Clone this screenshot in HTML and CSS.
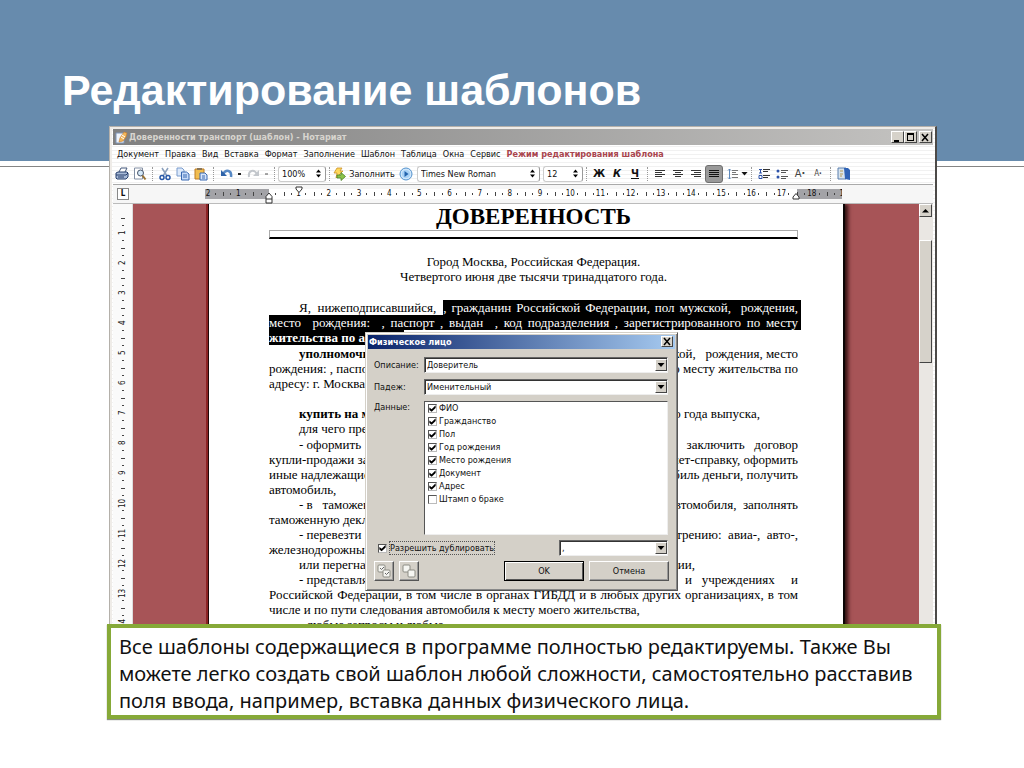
FILE: index.html
```html
<!DOCTYPE html>
<html lang="ru">
<head>
<meta charset="utf-8">
<title>Редактирование шаблонов</title>
<link rel="stylesheet" href="styles.css">
</head>
<body>
<main class="slide">
<h1 class="slide-title">Редактирование шаблонов</h1>
<section class="stage">
<div class="window">
  <header class="titlebar">
    <svg class="app-icon" width="13" height="13" viewBox="0 0 13 13"><path d="M1 2h8v10H1z" fill="#eef3fa" stroke="#7c94b8"/><path d="M4 11 5 7 9 1l3 1-1 4-3 4z" fill="#f2b65a" stroke="#c77a28" stroke-width=".6"/><path d="m7 4 3 2M6 6l3 2" stroke="#fff"/></svg>
    <span class="titlebar-text">Доверенности транспорт (шаблон) - Нотариат</span>
    <div class="win-buttons">
      <button class="win-btn" aria-label="Свернуть"><svg width="9" height="9" viewBox="0 0 9 9"><path d="M1 8h5" stroke="#000" stroke-width="2"/></svg></button>
      <button class="win-btn" aria-label="Развернуть"><svg width="9" height="9" viewBox="0 0 9 9"><path d="M1 1.500h7M1.500 1v7M7.500 1v7M1 7.500h7" stroke="#000" fill="none"/><path d="M1 1h7" stroke="#000" stroke-width="2"/></svg></button>
      <button class="win-btn close" aria-label="Закрыть"><svg width="9" height="9" viewBox="0 0 9 9"><path d="m1 1 6 7M7 1 1 8" stroke="#000" stroke-width="1.500"/></svg></button>
    </div>
  </header>
  <nav class="menu">
    <a href="#">Документ</a><a href="#">Правка</a><a href="#">Вид</a><a href="#">Вставка</a><a href="#">Формат</a><a href="#">Заполнение</a><a href="#">Шаблон</a><a href="#">Таблица</a><a href="#">Окна</a><a href="#">Сервис</a>
    <strong class="mode">Режим редактирования шаблона</strong>
  </nav>
  <div class="toolbar">
    <button class="tool" aria-label="Печать"><svg width="14" height="14" viewBox="0 0 14 14"><path d="m4 5 2-4h6l-2 4" fill="#fff" stroke="#44597c"/><path d="m1 6 2-1h9l1 1v4l-2 2H2l-1-1z" fill="#a9bbd8" stroke="#263f6d"/><path d="M1 8h10l2-2M3 10h6" stroke="#263f6d" fill="none"/></svg></button>
    <button class="tool" aria-label="Просмотр"><svg width="14" height="14" viewBox="0 0 14 14"><path d="M1.500 1h8v11h-8z" fill="#fff" stroke="#8490a4"/><circle cx="7.500" cy="6" r="3" fill="#d5e9f8" stroke="#48546a"/><path d="m9.500 8.500 3 4" stroke="#9a7333" stroke-width="2"/></svg></button>
    <span class="sep"></span>
    <button class="tool" aria-label="Вырезать"><svg width="12" height="14" viewBox="0 0 12 14"><path d="m3 1 5 8M9 1 4 9" stroke="#8ba0bd" stroke-width="1.500"/><circle cx="3" cy="10.500" r="2" fill="none" stroke="#2758a8" stroke-width="1.500"/><circle cx="9" cy="10.500" r="2" fill="none" stroke="#2758a8" stroke-width="1.500"/></svg></button>
    <button class="tool" aria-label="Копировать"><svg width="14" height="14" viewBox="0 0 14 14"><path d="M1 1h5l2 2v6H1z" fill="#dce9fa" stroke="#7a9ccd"/><path d="M5.500 5h5l2.500 2v6H5.500z" fill="#c7dbf8" stroke="#3968b2"/><path d="M7 8h4M7 10h4" stroke="#3968b2"/></svg></button>
    <button class="tool" aria-label="Вставить"><svg width="14" height="14" viewBox="0 0 14 14"><path d="M1 2h9v10H1z" fill="#f1bd4f" stroke="#bd7d25"/><path d="M3 1h5v2H3z" fill="#8a7657"/><path d="M6 6h5l2 2v5H6z" fill="#d5e4fa" stroke="#3968b2"/><path d="M8 9h3M8 11h3" stroke="#3968b2"/></svg></button>
    <span class="sep"></span>
    <button class="tool" aria-label="Отменить"><svg width="13" height="12" viewBox="0 0 13 12"><path d="M3 6c3-5 9-4 8 3" fill="none" stroke="#5688c4" stroke-width="2.500"/><path d="M1 2v6h6z" fill="#2d62a8"/></svg></button>
    <span class="drop"></span>
    <button class="tool" aria-label="Вернуть"><svg width="13" height="12" viewBox="0 0 13 12"><path d="M10 6C7 1 1 2 2 9" fill="none" stroke="#c3c7cc" stroke-width="2"/><path d="M12 2v6H6z" fill="#c3c7cc"/></svg></button>
    <span class="drop faded"></span>
    <span class="sep"></span>
    <label class="combo combo-zoom"><input aria-label="Масштаб" value="100%"><svg width="7" height="9" viewBox="0 0 7 9"><path d="m1 3.500 2.500-3 2.500 3zM1 5.500l2.500 3 2.500-3z"/></svg></label>
    <span class="sep"></span>
    <button class="tool fill"><svg width="13" height="14" viewBox="0 0 13 14"><path d="M4 1h5L7 4h3L3 11l1-5H1z" fill="#ffd85a" stroke="#c9912a" stroke-width=".8"/><path d="M4 8h4V5.500l4.500 4-4.500 4V11H4z" fill="#8bc34a" stroke="#4a8224" stroke-width=".8"/></svg>Заполнить</button>
    <button class="tool play" aria-label="Запуск"><svg width="14" height="14" viewBox="0 0 14 14"><circle cx="7" cy="7" r="6" fill="#cfe6fb" stroke="#5292cd"/><circle cx="7" cy="7" r="4" fill="#a7d1f6"/><path d="m5.500 4 4 3-4 3z" fill="#2363ad"/></svg></button>
    <label class="combo combo-font"><input aria-label="Шрифт" value="Times New Roman"><svg width="7" height="9" viewBox="0 0 7 9"><path d="m1 3.500 2.500-3 2.500 3zM1 5.500l2.500 3 2.500-3z"/></svg></label>
    <label class="combo combo-size"><input aria-label="Размер" value="12"><svg width="7" height="9" viewBox="0 0 7 9"><path d="m1 3.500 2.500-3 2.500 3zM1 5.500l2.500 3 2.500-3z"/></svg></label>
    <span class="sep"></span>
    <button class="tool letter">Ж</button><button class="tool letter"><i>К</i></button><button class="tool letter"><u>Ч</u></button>
    <span class="sep"></span>
    <button class="tool" aria-label="По левому краю"><svg width="11" height="10" viewBox="0 0 11 10"><path d="M0 1.500h10M0 3.500h7M0 5.500h10M0 7.500h7" stroke="#333"/></svg></button>
    <button class="tool" aria-label="По центру"><svg width="11" height="10" viewBox="0 0 11 10"><path d="M0 1.500h10M2 3.500h6M0 5.500h10M2 7.500h6" stroke="#333"/></svg></button>
    <button class="tool" aria-label="По правому краю"><svg width="11" height="10" viewBox="0 0 11 10"><path d="M0 1.500h10M3 3.500h7M0 5.500h10M3 7.500h7" stroke="#333"/></svg></button>
    <button class="tool pressed" aria-label="По ширине"><svg width="11" height="10" viewBox="0 0 11 10"><path d="M0 1.500h10M0 3.500h10M0 5.500h10M0 7.500h10" stroke="#111"/></svg></button>
    <button class="tool" aria-label="Интервал"><svg width="11" height="12" viewBox="0 0 11 12"><path d="M2.500 1v10M1 2.500 2.500 1 4 2.500M1 9.500 2.500 11 4 9.500" stroke="#5d88bb" fill="none"/><path d="M5 2.500h6M5 4.500h4M5 6.500h6M5 9.500h6" stroke="#777"/></svg></button>
    <span class="triangle"></span>
    <span class="sep"></span>
    <button class="tool" aria-label="Нумерация"><svg width="12" height="12" viewBox="0 0 12 12"><path d="M1 1.500h3M2.500 1v4M1 5h3M1 7.500h3v3H1z" stroke="#2b51a8" fill="none"/><path d="M5 1.500h7M5 3.500h5M5 7.500h7M5 9.500h5" stroke="#333"/></svg></button>
    <button class="tool" aria-label="Маркеры"><svg width="12" height="12" viewBox="0 0 12 12"><circle cx="2" cy="3" r="1.500" fill="#2b51a8"/><circle cx="2" cy="9" r="1.500" fill="#2b51a8"/><path d="M5 2.500h7M5 4.500h5M5 8.500h7M5 10.500h5" stroke="#555"/></svg></button>
    <button class="tool grow">A<b>·</b></button><button class="tool shrink">A<b>·</b></button>
    <span class="sep"></span>
    <button class="tool" aria-label="Справочник"><svg width="13" height="14" viewBox="0 0 13 14"><path d="M1 1h8v11H1z" fill="#d8e4ee" stroke="#5b7fae"/><path d="M7 1h4l2 2v10l-5-1z" fill="#2e62b5"/><path d="M3 4h3M3 7h3M3 9h2" stroke="#b49a55"/></svg></button>
  </div>
  <div class="ruler-row">
    <span class="tab-mark">L</span>
    <div class="ruler"><span>2</span><span>1</span><span></span><span>1</span><span>2</span><span>3</span><span>4</span><span>5</span><span>6</span><span>7</span><span>8</span><span>9</span><span>10</span><span>11</span><span>12</span><span>13</span><span>14</span><span>15</span><span>16</span><span>17</span><span>18</span><span>1</span>
      <svg class="marker marker-left" width="8" height="12" viewBox="0 0 8 12"><path d="M1 4.500 4 1l3 3.500V11H1zM1 7h6" fill="#fff" stroke="#333"/></svg>
      <svg class="marker marker-first" width="8" height="8" viewBox="0 0 8 8"><path d="M1 1h6v2L4 6.500 1 3z" fill="#fff" stroke="#333"/></svg>
      <svg class="marker marker-right" width="8" height="8" viewBox="0 0 8 8"><path d="M1 7h6V5L4 1.500 1 5z" fill="#fff" stroke="#333"/></svg>
    </div>
  </div>
  <div class="editor">
    <div class="vruler"><span>1</span><span>2</span><span>3</span><span>4</span><span>5</span><span>6</span><span>7</span><span>8</span><span>9</span><span>10</span><span>11</span><span>12</span><span>13</span><span>14</span></div>
    <div class="desk">
    <article class="page">
      <h2 class="doc-title">ДОВЕРЕННОСТЬ</h2>
      <div class="doc-rule"></div>
      <p class="center">Город Москва, Российская Федерация.</p>
      <p class="center">Четвертого июня две тысячи тринадцатого года.</p>
      <div class="opening">
        <p class="line in"><span>Я,&nbsp; нижеподписавшийся,</span><span class="sel grow-line">, гражданин Российской Федерации, пол мужской,&nbsp; рождения,</span></p>
        <p class="line"><span class="sel grow-line">место&nbsp; рождения:&nbsp; , паспорт , выдан&nbsp; , код подразделения , зарегистрированного по месту</span></p>
        <p class="line"><b class="sel">жительства по адресу:</b></p>
      </div>
      <div>
        <p class="line in"><b>уполномочиваю</b><span>мужской,&nbsp;&nbsp; рождения, место</span></p>
        <p class="line"><span>рождения: , паспорт</span><span>по месту жительства по</span></p>
        <p class="line"><span>адресу: г. Москва</span></p>
      </div>
      <div class="bargain">
        <p class="line in"><b>купить на мое имя</b><span class="year">-го года выпуска,</span></p>
        <p class="line in"><span>для чего предоставляю</span></p>
      </div>
      <div>
        <p class="line in"><span>- оформить</span><span>заключить&nbsp;&nbsp; договор</span></p>
        <p class="line"><span>купли-продажи за</span><span>счет-справку, оформить</span></p>
        <p class="line"><span>иные надлежащие</span><span>автомобиль деньги, получить</span></p>
        <p class="line"><span>автомобиль,</span></p>
      </div>
      <div>
        <p class="line in"><span>- в&nbsp;&nbsp; таможенных</span><span>автомобиля,&nbsp; заполнять</span></p>
        <p class="line"><span>таможенную декларацию</span></p>
      </div>
      <div>
        <p class="line in"><span>- перевезти</span><span>усмотрению:&nbsp; авиа-,&nbsp; авто-,</span></p>
        <p class="line"><span>железнодорожным</span></p>
      </div>
      <div>
        <p class="line in"><span>или перегнать</span><span class="nation">Федерации,</span></p>
        <p class="line in"><span>- представлять</span><span>и&nbsp;&nbsp; учреждениях&nbsp;&nbsp;&nbsp;&nbsp; и</span></p>
        <p class="line"><span class="grow-line">Российской Федерации, в том числе в органах ГИБДД и в любых других организациях, в том</span></p>
        <p class="line"><span>числе и по пути следования автомобиля к месту моего жительства,</span></p>
        <p class="line in"><span>- любые запросы и любые</span></p>
      </div>
    </article>
    </div>
    <div class="scroll"><button class="scroll-up" aria-label="Вверх"><svg width="7" height="5" viewBox="0 0 7 5"><path d="M0 4.500h7L3.500 1z"/></svg></button><span class="thumb"></span></div>

    <form class="dialog">
      <div class="dialog-title"><span>Физическое лицо</span><button type="button" class="win-btn" aria-label="Закрыть окно"><svg width="9" height="9" viewBox="0 0 9 9"><path d="m1 1 6 7M7 1 1 8" stroke="#000" stroke-width="1.500"/></svg></button></div>
      <div class="dialog-body">
        <label for="desc">Описание:</label>
        <div class="pick"><select id="desc"><option>Доверитель</option></select><span class="arrow"></span></div>
        <label for="case">Падеж:</label>
        <div class="pick"><select id="case"><option>Именительный</option></select><span class="arrow"></span></div>
        <span class="list-label">Данные:</span>
        <div class="list">
          <label><input type="checkbox" checked>ФИО</label>
          <label><input type="checkbox" checked>Гражданство</label>
          <label><input type="checkbox" checked>Пол</label>
          <label><input type="checkbox" checked>Год рождения</label>
          <label><input type="checkbox" checked>Место рождения</label>
          <label><input type="checkbox" checked>Документ</label>
          <label><input type="checkbox" checked>Адрес</label>
          <label><input type="checkbox">Штамп о браке</label>
        </div>
      </div>
      <div class="dialog-options">
        <label class="dup"><input type="checkbox" checked><span>Разрешить дублировать</span></label>
        <div class="pick short"><select aria-label="Разделитель"><option>,</option></select><span class="arrow"></span></div>
      </div>
      <div class="dialog-actions">
        <button type="button" class="btn square" aria-label="Отметить все"><svg width="14" height="14" viewBox="0 0 14 14"><g fill="#f6f6f2" stroke="#8c8c84"><rect x="1" y="1" width="7" height="7" rx="1"/><rect x="6" y="6" width="7" height="7" rx="1"/></g><path d="m3 4 1.500 1.500L7 3M8 9l1.500 1.500L12 8" fill="none" stroke="#666"/></svg></button>
        <button type="button" class="btn square" aria-label="Снять все"><svg width="14" height="14" viewBox="0 0 14 14"><g fill="#f6f6f2" stroke="#8c8c84"><rect x="1" y="1" width="7" height="7" rx="1"/><rect x="6" y="6" width="7" height="7" rx="1"/></g></svg></button>
        <button type="button" class="btn default">OK</button>
        <button type="button" class="btn">Отмена</button>
      </div>
    </form>
  </div>
</div>
<p class="caption">Все шаблоны содержащиеся в программе полностью редактируемы. Также Вы можете легко создать свой шаблон любой сложности, самостоятельно расставив поля ввода, например, вставка данных физического лица.</p>
</section>
</main>
</body>
</html>
```

FILE: styles.css
```css
* { box-sizing: border-box; }
body { margin: 0; background: #fff; }
p, h1, h2 { margin: 0; }
button, input, select { font: inherit; color: inherit; margin: 0; padding: 0; border: 0; background: none; }
svg { display: block; flex: none; }

.slide {
  min-height: 100vh;
  background: linear-gradient(#678bad 0 161px, #fff 161px 166px, #858585 166px 167px, #fff 167px);
}
.slide-title {
  padding: 66px 62px 11px;
  font: bold 43px/49px "Liberation Sans", Arial, sans-serif;
  color: #fff;
}
.stage { margin: 0 83px 0 107px; }

.window {
  margin: 0 4px 0 2px;
  border: 1px solid #b4b0aa;
  border-right: 2px solid #4c4a48;
  background: repeating-linear-gradient(#fff 0 3px, #f1f1f1 3px 4px);
  box-shadow: inset 2px 2px #efece8;
  padding: 2px 2px 0 3px;
  font: 9px/12px "DejaVu Sans Condensed", "DejaVu Sans", sans-serif;
  color: #111;
}
.titlebar {
  display: flex; align-items: center;
  height: 16px; padding: 0 1px 0 2px;
  background: linear-gradient(90deg, #808080, #c4c3c1);
  color: #d8d5cf; font-weight: bold;
}
.titlebar-text { flex: 1; }
.app-icon { margin-right: 1px; }
.win-buttons { display: flex; }
.win-btn {
  display: grid; place-items: center;
  width: 13px; height: 12px;
  background: #d6d2ca;
  border: 1px solid; border-color: #fff #444 #444 #fff;
}
.close { margin-left: 2px; }

.menu { display: flex; align-items: center; gap: 6px; height: 18px; padding-left: 4px; white-space: nowrap; }
.menu a { color: inherit; text-decoration: none; }
.mode { color: #a8444c; }

.toolbar { display: flex; align-items: center; height: 22px; border-bottom: 1px solid #aaa; white-space: nowrap; }
.tool { display: flex; align-items: center; justify-content: center; width: 18px; height: 18px; flex: none; }
.sep { flex: none; width: 1px; height: 14px; margin: 0 3px; border-left: 1px dotted #999; }
.drop { flex: none; width: 9px; height: 3px; background: linear-gradient(#222, #222) center / 3px 2px no-repeat; }
.faded { opacity: .4; }
.triangle { flex: none; width: 7px; height: 4px; background: #111; clip-path: polygon(0 0, 100% 0, 50% 100%); }
.combo { display: flex; align-items: center; flex: none; height: 16px; padding: 0 3px; background: #fff; border: 1px solid #ccc; border-right-color: #999; border-radius: 3px; }
.combo input { flex: 1; min-width: 0; width: 0; }
.combo-zoom { width: 48px; }
.combo-font { width: 123px; margin-right: 3px; }
.combo-size { width: 40px; }
.fill { width: 62px; gap: 3px; }
.play { width: 22px; }
.letter { font-weight: bold; font-size: 11px; }
.grow { color: #444; font-size: 11px; }
.shrink { color: #444; font-size: 8px; }
.pressed { background: #999; border: 1px solid #6f6f6f; border-radius: 3px; }

.ruler-row { display: flex; align-items: center; height: 19px; padding-right: 76px; background: #f6f6f6; border-bottom: 1px solid #bbb; }
.tab-mark { margin: 0 64px 0 4px; width: 12px; height: 12px; line-height: 10px; text-align: center; font-weight: bold; background: #fff; border: 1px solid #888; flex: none; font-size: 8px; }
.ruler { position: relative; flex: 1; min-width: 0; display: grid; grid-template-columns: repeat(22, 1fr); height: 10px; line-height: 10px; text-align: center; font-size: 8px;
  clip-path: inset(-6px 15px -6px 12px);
  background: linear-gradient(90deg, #a3a3a7 76px, #fff 76px calc(100% - 60px), #a3a3a7 calc(100% - 60px)); }
.ruler span {
  background:
    linear-gradient(#444, #444) 0 50% / 1px 4px no-repeat,
    linear-gradient(#444, #444) 25% 50% / 1px 2px no-repeat,
    linear-gradient(#444, #444) 75% 50% / 1px 2px no-repeat;
}
.marker { position: absolute; }
.marker-left { left: 72px; top: 3px; }
.marker-first { left: 102px; top: -3px; }
.marker-right { right: 57px; top: 3px; }

.editor { position: relative; display: flex; height: 430px; overflow: hidden; }
.vruler { flex: none; width: 20px; padding-top: 14px; background: #fafafa; border-right: 1px solid #ddd; overflow: hidden; font-size: 8px; }
.vruler span {
  display: block; width: 12px; height: 30px; margin: 0 auto; line-height: 12px; text-align: center;
  writing-mode: vertical-rl; transform: rotate(180deg);
  background:
    linear-gradient(#444, #444) 50% 100% / 4px 1px no-repeat,
    linear-gradient(#444, #444) 50% 25% / 2px 1px no-repeat,
    linear-gradient(#444, #444) 50% 75% / 2px 1px no-repeat;
}
.desk { flex: 1; min-width: 0; display: flex; justify-content: center; background: #a75457; overflow: hidden; }
.page {
  width: 634px; flex: none; padding: 0 45px 0 60px;
  background: #fff; color: #000;
  box-shadow: -1px 0 #200808, -3px 0 #8b2224, 2px 0 #0c0606, 5px 0 4px #301010;
  font: 13px/15px "Liberation Serif", "Times New Roman", serif;
}
.doc-title { font-size: 23px; line-height: 26px; text-align: center; }
.doc-rule { height: 9px; margin-bottom: 15px; border: 1px solid #aaa; border-bottom: 2px solid #000; }
.center { text-align: center; }
.opening { margin: 16px 0 1px; }
.bargain { margin: 15px 0 1px; }
.line { display: flex; justify-content: space-between; white-space: pre-wrap; }
.line > * { white-space: nowrap; }
.in { padding-left: 30px; }
.line > .grow-line { flex: 1; white-space: normal; text-align: justify; text-align-last: justify; height: 15px; }
.sel { background: #000; color: #fff; box-shadow: 3px 0 #000; }
.line > .sel:not(:first-child) { margin-left: 7px; }
.year { padding-right: 38px; }
.nation { padding-right: 103px; }

.scroll { flex: none; width: 14px; background: #eae7e3; }
.scroll-up { display: grid; place-items: center; width: 13px; height: 13px; background: #d6d2ca; border: 1px solid; border-color: #fff #444 #444 #fff; }
.thumb { display: block; width: 13px; height: 123px; margin-top: 23px; background: #d6d2ca; border: 1px solid; border-color: #fff #444 #444 #fff; }

.dialog {
  position: absolute; left: 252px; top: 128px; width: 313px;
  padding: 2px; background: #d4d0c8;
  border: 1px solid; border-color: #d4d0c8 #555 #555 #d4d0c8;
  box-shadow: inset 1px 1px #fff, inset -1px -1px #888;
}
.dialog-title { display: flex; align-items: center; justify-content: space-between; height: 14px; padding: 0 2px 1px 1px; color: #fff; font-weight: bold; background: linear-gradient(90deg, #0a246a, #a6caf0); }
.dialog-title .win-btn { width: 12px; height: 11px; color: #000; }
.dialog-body { display: grid; grid-template-columns: 50px 1fr; row-gap: 6px; padding: 8px 7px 0 6px; align-items: center; }
.list-label { align-self: start; }
.pick { position: relative; height: 16px; background: #fff; border: 1px solid; border-color: #666 #eee #eee #666; box-shadow: inset 1px 1px #333; }
.pick select { appearance: none; width: 100%; height: 14px; padding: 0 16px 0 2px; line-height: 14px; border-radius: 0; display: block; }
.arrow { position: absolute; right: 0; top: 1px; width: 12px; height: 12px; pointer-events: none; border: 1px solid; border-color: #fff #444 #444 #fff; background: #d4d0c8; }
.arrow::after { content: ""; display: block; margin: 3px auto 0; width: 7px; height: 4px; background: #000; clip-path: polygon(0 0, 100% 0, 50% 100%); }
.list { height: 134px; padding-left: 3px; background: #fff; border: 1px solid; border-color: #555 #eee #eee #555; }
.list label { display: flex; align-items: center; gap: 2px; height: 13px; line-height: 11px; }
input[type="checkbox"] { appearance: none; flex: none; width: 9px; height: 9px; background: #fff; border: 1px solid; border-color: #555 #bbb #bbb #555; display: block; }
input[type="checkbox"]:checked::after { content: ""; display: block; width: 7px; height: 7px; background: #000; clip-path: polygon(5% 35%, 38% 62%, 95% 5%, 95% 42%, 38% 98%, 5% 70%); }
.dialog-options { display: flex; justify-content: space-between; align-items: center; padding: 5px 7px 0 10px; }
.dup { display: flex; align-items: center; gap: 3px; }
.dup span { outline: 1px dotted #555; }
.short { width: 109px; }
.dialog-actions { display: flex; gap: 5px; padding: 5px 6px 7px; }
.btn { width: 80px; height: 20px; background: #d4d0c8; border: 1px solid; border-color: #fff #555 #555 #fff; box-shadow: inset -1px -1px #999; }
.square { display: grid; place-items: center; width: 20px; }
.default { margin-left: auto; border-color: #000; box-shadow: inset 1px 1px #fff, inset -1px -1px #555; }

.caption {
  position: relative; margin-top: -11px; padding: 5px 8px 1px;
  background: #fff; border: 4px solid #86a938; box-shadow: 0 1px 1px #8a8f80;
  font: 20px/27px "Noto Sans", "Open Sans", sans-serif; color: #111;
}
```
